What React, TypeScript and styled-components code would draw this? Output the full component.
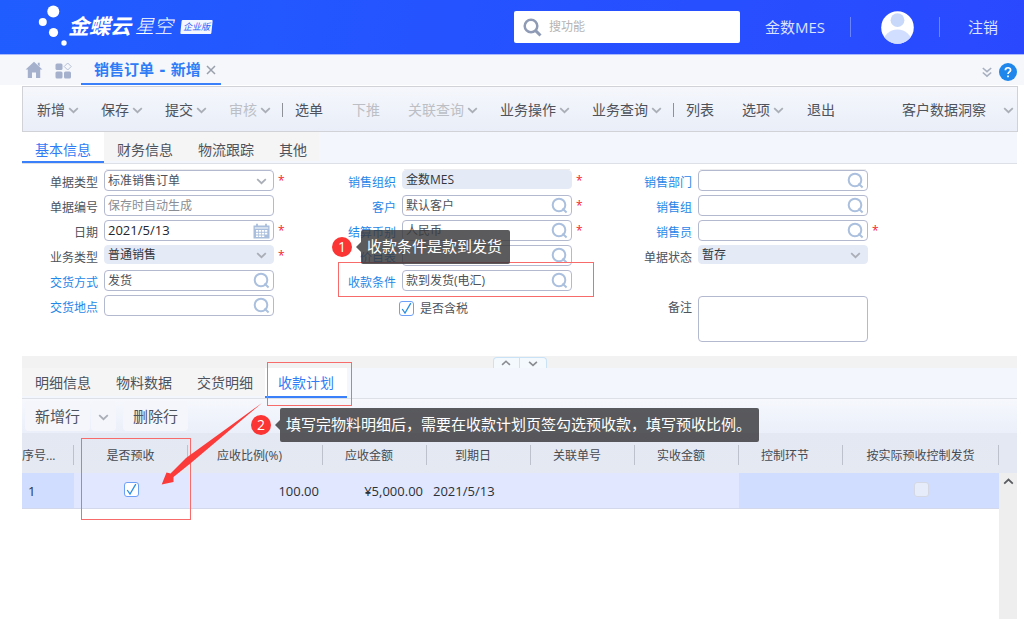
import React from "react";
import styled, { createGlobalStyle, css } from "styled-components";

const GlobalStyle = createGlobalStyle`
  *, *::before, *::after { box-sizing: border-box; }
  body {
    margin: 0;
    background: #fff;
    color: #4d525b;
    font-family: "Open Sans", "Noto Sans CJK SC", sans-serif;
    font-size: 12px;
    line-height: 20px;
  }
  button, input, select, textarea { font: inherit; color: inherit; margin: 0; }
  button { background: none; border: 0; padding: 0; cursor: pointer; white-space: nowrap; }
`;

const Page = styled.div`
  display: flex;
  flex-direction: column;
  min-height: 100vh;
  min-width: 960px;
`;

/* ---------- header ---------- */

const Header = styled.header`
  display: flex;
  align-items: center;
  height: 55px;
  padding: 0 26px 0 37px;
  border-bottom: 1px solid #a9b9fb;
  background: linear-gradient(100deg, #205dff 0%, #2553ff 45%, #2a49ff 100%);
  color: #dbe3ff;
  font-size: 15px;
`;

const Brand = styled.div`
  display: flex;
  align-items: center;
  flex: 1;
  color: #fff;
  font-style: italic;
  line-height: 18px;
  white-space: nowrap;
`;

const BrandName = styled.span`
  margin-left: 1px;
  padding-bottom: 2px;
  font-size: 21px;
  font-weight: 700;
`;

const BrandSuffix = styled.span`
  margin: 0 8px 0 4px;
  padding-bottom: 2px;
  font-size: 19px;
  font-weight: 300;
`;

const Edition = styled.span`
  position: relative;
  z-index: 0;
  height: 14px;
  padding: 0 2px;
  color: #2f5dfb;
  font-size: 9px;
  line-height: 14px;
  &::before {
    content: "";
    position: absolute;
    inset: 0;
    z-index: -1;
    border-radius: 1px;
    background: #f4f7ff;
    transform: skewX(-6deg);
  }
`;

const SearchBox = styled.label`
  display: flex;
  align-items: center;
  gap: 7px;
  width: 226px;
  height: 32px;
  margin-right: 25px;
  padding: 0 9px;
  border-radius: 2px;
  background: #fff;
  input {
    flex: 1;
    min-width: 0;
    border: 0;
    outline: 0;
    padding: 0;
    color: #555;
    font-size: 12px;
  }
  input::placeholder { color: #b4b4b4; }
`;

const HeaderDivider = styled.span`
  width: 1px;
  height: 20px;
  margin: 0 28px 0 25px;
  background: #6a86ff;
`;

const AvatarButton = styled.button`
  display: flex;
  margin-left: 2px;
`;

/* ---------- open documents ---------- */

const DocBar = styled.div`
  display: flex;
  align-items: center;
  height: 30px;
  padding: 0 7px 0 25px;
  background: #f5f7fb;
`;

const DocTools = styled.div`
  display: flex;
  gap: 12px;
  align-items: center;
  width: 56px;
  button { display: flex; }
`;

const DocTab = styled.div`
  display: flex;
  align-items: center;
  gap: 5px;
  height: 30px;
  padding: 2px 5px 0 13px;
  border-bottom: 2px solid #3a80fb;
  color: #2f7cf6;
  font-family: "DejaVu Sans", "Noto Sans CJK SC", sans-serif;
  font-size: 15px;
  font-weight: 700;
  white-space: pre;
  button { display: flex; }
`;

const DocRight = styled.div`
  display: flex;
  align-items: center;
  gap: 7px;
  margin-left: auto;
  padding-top: 4px;
  button { display: flex; }
`;

const HelpButton = styled.button`
  justify-content: center;
  width: 18px;
  height: 18px;
  border-radius: 50%;
  background: #1f87ec;
  color: #fff;
`;

/* ---------- toolbar ---------- */

const Content = styled.main`
  display: flex;
  flex-direction: column;
  flex: 1;
  padding: 1px 6px 0 22px;
`;

const Toolbar = styled.div`
  display: flex;
  align-items: center;
  height: 46px;
  padding: 1px 3px 0;
  border: 1px solid #d0d2d8;
  background: linear-gradient(#f5f7fc, #e9eef8);
`;

const ToolButton = styled.button<{ $menu?: boolean }>`
  display: flex;
  align-items: center;
  gap: 3px;
  padding: ${(p) => (p.$menu ? "0 11px" : "0 17px 0 12px")};
  font-size: 14px;
  &:disabled { color: #bcbfc5; cursor: default; }
`;

const ToolSeparator = styled.span`
  width: 1px;
  height: 14px;
  background: #8e9198;
`;

const ToolSpacer = styled.span`
  flex: 1;
`;

/* ---------- tab strips ---------- */

const TabStrip = styled.div<{ $tall?: boolean }>`
  display: flex;
  height: ${(p) => (p.$tall ? 32 : 31)}px;
  margin-right: 1px;
  border-bottom: 1px solid #dde0e7;
  background: #f3f6fc;
  > button { padding-top: ${(p) => (p.$tall ? 6 : 2)}px; }
`;

const Tab = styled.button<{ $active?: boolean }>`
  position: relative;
  padding: 0 12px 0 13px;
  border-bottom: 2px solid transparent;
  background: #f5f5f6;
  background-clip: padding-box;
  font-size: 14px;
  ${(p) =>
    p.$active &&
    css`
      padding-right: 13px;
      border-color: #3a80fb;
      background: #fff;
      color: #2f7cf6;
    `}
`;

/* ---------- form ---------- */

const Form = styled.form`
  display: grid;
  grid-template-columns: 298fr 296fr 402fr;
  height: 192px;
`;

const Column = styled.div`
  position: relative;
  display: grid;
  grid-template-columns: 76px 170px 10px;
  grid-auto-rows: 21px;
  gap: 4px 6px;
  align-content: start;
  padding-top: 6px;
  background: linear-gradient(#ececee, #ececee) 84px 5px / 166px 1px no-repeat;
`;

const FieldLabel = styled.label<{ $link?: boolean; $last?: boolean }>`
  grid-column: 1;
  ${(p) => p.$last && "grid-row: 6;"}
  padding-top: 3px;
  color: ${(p) => (p.$link ? "#1f87e8" : "#4d525b")};
  text-align: right;
  white-space: nowrap;
`;

const Control = styled.div<{ $locked?: boolean; $lookup?: boolean }>`
  display: flex;
  align-items: center;
  height: ${(p) => (p.$locked ? "19px" : "21px")};
  padding: 0 ${(p) => (p.$lookup ? 3 : 6)}px 0 3px;
  border: 1px solid ${(p) => (p.$locked ? "#e4eaf6" : "#b3b9ce")};
  border-radius: 4px;
  background: ${(p) => (p.$locked ? "#e4eaf6" : "#fff")};
  color: ${(p) => (p.$locked ? "#33373e" : "#4d525b")};
  input, select {
    flex: 1;
    width: 0;
    height: 17px;
    padding: 0;
    border: 0;
    outline: 0;
    appearance: none;
    background: none;
    line-height: 17px;
    opacity: 1;
  }
  input::placeholder { color: #8a8d93; }
  button { display: flex; }
  svg { flex: none; }
`;

const DateInput = styled.input`
  color: #22262c;
  font-size: 13px;
`;

const Required = styled.span`
  margin-left: -2px;
  color: #f5222d;
  font-size: 12px;
  line-height: 22px;
`;

const Remark = styled.textarea`
  grid-column: 2;
  grid-row: 6;
  height: 46px;
  margin-top: 1px;
  border: 1px solid #b3b9ce;
  border-radius: 4px;
  outline: 0;
  resize: none;
`;

const CheckRow = styled.label`
  grid-column: 2 / 4;
  display: flex;
  align-items: center;
  gap: 6px;
  height: 21px;
  margin: 3px 0 0 -3px;
`;

const CheckBox = styled.input.attrs({ type: "checkbox" })`
  appearance: none;
  display: inline-block;
  width: 15px;
  height: 15px;
  border: 1px solid #6fa0f7;
  border-radius: 3px;
  background: #fff;
  vertical-align: middle;
  &:checked {
    background: #fff
      url("data:image/svg+xml,%3Csvg xmlns='http://www.w3.org/2000/svg' viewBox='0 0 13 13'%3E%3Cpath d='M2.2 7 5 11 10.8 1.2' fill='none' stroke='%232b8fe0' stroke-width='1.3'/%3E%3C/svg%3E");
  }
  &:disabled { border-color: #d3d8e4; background: #e6ecfa; }
`;

/* ---------- splitter ---------- */

const Splitter = styled.div`
  display: flex;
  justify-content: center;
  align-items: flex-end;
  height: 12px;
  margin-right: 1px;
  background: #f2f2f2;
`;

const SplitButton = styled.button`
  display: flex;
  justify-content: center;
  align-items: center;
  width: 27px;
  height: 11px;
  border: 1px solid #c9e2f6;
  border-bottom: 0;
  background: #f4f9fd;
  &:first-child { border-radius: 4px 0 0 0; }
  &:last-child { border-left: 0; border-radius: 0 4px 0 0; }
`;

/* ---------- detail grid ---------- */

const GridTools = styled.div`
  display: flex;
  align-items: center;
  height: 34px;
  margin-right: 1px;
  padding-left: 3px;
  background: linear-gradient(#f6f8fd, #eaeff9);
`;

const GridButton = styled.button`
  display: flex;
  align-items: center;
  height: 30px;
  padding: 0 10px;
  border-radius: 4px;
  background: #f4f6fb;
  font-size: 15px;
`;

const DropButton = styled(GridButton)`
  margin: 0 7px 0 1px;
  padding: 0 7px;
`;

const GridPanel = styled.section`
  position: relative;
  display: flex;
  flex: 1;
  margin-right: 1px;
`;

const TableArea = styled.div`
  flex: 1;
`;

const Table = styled.table`
  width: 100%;
  table-layout: fixed;
  border-collapse: collapse;
  th {
    position: relative;
    height: 40px;
    padding: 6px 0 0;
    background: linear-gradient(#e3e8f2, #e5e9f2);
    color: #454a53;
    font-weight: 400;
    white-space: nowrap;
  }
  th::after {
    content: "";
    position: absolute;
    top: 12px;
    right: 0;
    width: 1px;
    height: 20px;
    background: #bcc1cc;
  }
  td {
    height: 35px;
    padding: 2px 0 0;
    border-bottom: 1px solid #d3d9ea;
    background: #e0e7fe;
    color: #2c3037;
    font-size: 13px;
    white-space: nowrap;
  }
`;

const Th = styled.th<{ $kind?: "first" | "check" }>`
  text-align: ${(p) => (p.$kind === "first" ? "left" : "center")};
  && { padding-right: ${(p) => (p.$kind ? "1px" : "12px")}; }
`;

const Td = styled.td<{ $align?: "left" | "right" | "center"; $dim?: boolean }>`
  && {
    padding-left: ${(p) => (p.$align === "left" || !p.$align ? "6px" : "0")};
    padding-right: ${(p) => (p.$align === "right" ? "4px" : "0")};
    text-align: ${(p) => p.$align || "left"};
    ${(p) => p.$dim && "background: #d1ddfe;"}
  }
  ${CheckBox} { display: block; margin: -4px auto 0; }
`;

const ScrollTrack = styled.div`
  width: 18px;
  padding-top: 43px;
  background: linear-gradient(#e4e8f2, #e4e8f2) 0 0 / 100% 40px no-repeat #eeeeee;
  text-align: center;
  svg { display: block; margin: 0 auto; }
`;

/* ---------- guide marks over the page ---------- */

const Mark = styled.span<{ $x: number; $y: number; $w: number; $h: number }>`
  position: absolute;
  z-index: 2;
  left: ${(p) => p.$x}px;
  top: ${(p) => p.$y}px;
  width: ${(p) => p.$w}px;
  height: ${(p) => p.$h}px;
  border: 1px solid #f86b6b;
  pointer-events: none;
`;

const Note = styled.div<{ $x: number; $y: number }>`
  position: absolute;
  z-index: 3;
  left: ${(p) => p.$x}px;
  top: ${(p) => p.$y}px;
  display: flex;
  align-items: center;
  color: #fff;
  font-size: 15px;
  white-space: nowrap;
`;

const NoteNumber = styled.span`
  width: 20px;
  height: 20px;
  border-radius: 50%;
  background: #fb3434;
  font-size: 14px;
  line-height: 20px;
  text-align: center;
`;

const NoteText = styled.span`
  position: relative;
  height: 34px;
  margin-left: 9px;
  padding: 0 8px 0 6px;
  border-radius: 2px;
  background: rgba(58, 58, 60, 0.83);
  line-height: 33px;
  &::before {
    content: "";
    position: absolute;
    top: 12px;
    left: -5px;
    border: 5px solid transparent;
    border-left: 0;
    border-right-color: rgba(58, 58, 60, 0.83);
  }
`;

const Arrow = styled.svg`
  position: absolute;
  z-index: 2;
  left: 138px;
  top: -32px;
  pointer-events: none;
`;

/* ---------- icons ---------- */

const Chevron = ({ up, color = "#aaaeb6", size = 11 }: { up?: boolean; color?: string; size?: number }) => (
  <svg width={size} height={size} viewBox="0 0 11 11" fill="none" stroke={color} strokeWidth="1.8">
    <path d={up ? "M1.2 7.6 5.5 3.6 9.8 7.6" : "M1.2 4.2 5.5 8.2 9.8 4.2"} />
  </svg>
);

const Lens = () => (
  <svg width="17" height="17" viewBox="0 0 17 17" fill="none" stroke="#abc0de" strokeWidth="2">
    <circle cx="8" cy="8" r="6.3" />
    <path d="M11.4 11.6 15.6 15.4" />
  </svg>
);

const CalendarIcon = () => (
  <svg width="17" height="16" viewBox="0 0 17 16">
    <path fill="#a8bedc" d="M.5 2.5h2.6V.8h1.8v1.7h7.2V.8h1.8v1.7h2.6v13H.5z" />
    <path fill="#fff" d="M1.8 4.6h13.4v.9H1.8zM3 7h2.3v1.8H3zM6 7h2.3v1.8H6zM9 7h2.3v1.8H9zM12 7h2.3v1.8H12zM3 9.7h2.3v1.8H3zM6 9.7h2.3v1.8H6zM9 9.7h2.3v1.8H9zM12 9.7h2.3v1.8H12zM3 12.4h2.3V14H3zM6 12.4h2.3V14H6zM9 12.4h2.3V14H9z" />
  </svg>
);

const BrandDots = () => (
  <svg width="30" height="44" viewBox="0 0 30 44" fill="#fff">
    <circle cx="16.300" cy="6.500" r="6" />
    <circle cx="5.800" cy="17" r="4" />
    <circle cx="16.500" cy="27.500" r="4.600" />
    <circle cx="27" cy="38" r="2.700" />
  </svg>
);

const HomeIcon = () => (
  <svg width="18" height="18" viewBox="0 0 18 18" fill="#a5b0cc">
    <path d="M9 .8 17.400 8.600H15.200V17H11V11.500H7V17H2.800V8.600H.6zM12.800 1.800h1.900v3.600l-1.900-1.700z" />
  </svg>
);

const AppsIcon = () => (
  <svg width="17" height="17" viewBox="0 0 17 17" fill="#a5b0cc">
    <rect x=".5" y="1.500" width="7" height="6.500" rx="1.500" />
    <rect x=".5" y="9.500" width="7" height="7" rx="1.500" />
    <rect x="9" y="9.500" width="7" height="7" rx="1.500" />
    <path d="M12.700 1 16.200 4.500 12.700 8 9.200 4.500z" fill="none" stroke="#b7c0d8" />
  </svg>
);

const Avatar = () => (
  <svg width="33" height="33" viewBox="0 0 33 33">
    <defs>
      <clipPath id="face"><circle cx="16.500" cy="16.500" r="16.300" /></clipPath>
    </defs>
    <g clipPath="url(#face)">
      <rect width="33" height="33" fill="#fff" />
      <ellipse cx="16.500" cy="32" rx="14.500" ry="13.500" fill="#d2deff" />
      <circle cx="16.500" cy="9.500" r="8.500" fill="#fff" />
      <circle cx="16.500" cy="9.200" r="6.900" fill="#c8d8fb" />
    </g>
  </svg>
);

/* ---------- fields ---------- */

type FieldProps = {
  id: string;
  label: string;
  value?: string;
  placeholder?: string;
  kind: "lookup" | "select" | "text" | "date";
  link?: boolean;
  locked?: boolean;
  required?: boolean;
};

const Field = ({ id, label, value = "", placeholder, kind, link, locked, required }: FieldProps) => (
  <>
    <FieldLabel htmlFor={id} $link={link}>{label}</FieldLabel>
    <Control $locked={locked} $lookup={kind === "lookup" || kind === "date"}>
      {kind === "select" ? (
        <select id={id} disabled={locked} defaultValue={value}>
          <option>{value}</option>
        </select>
      ) : kind === "date" ? (
        <DateInput id={id} defaultValue={value} />
      ) : (
        <input id={id} defaultValue={value} placeholder={placeholder} readOnly={locked} />
      )}
      {kind === "select" && <Chevron />}
      {kind === "date" && <CalendarIcon />}
      {kind === "lookup" && (
        <button type="button" aria-label={label}><Lens /></button>
      )}
    </Control>
    <Required>{required ? "*" : ""}</Required>
  </>
);

type Tool = { text: string; menu?: boolean; off?: boolean; bar?: boolean };

const tools: Tool[] = [
  { text: "新增", menu: true },
  { text: "保存", menu: true },
  { text: "提交", menu: true },
  { text: "审核", menu: true, off: true, bar: true },
  { text: "选单" },
  { text: "下推", off: true },
  { text: "关联查询", menu: true, off: true },
  { text: "业务操作", menu: true },
  { text: "业务查询", menu: true, bar: true },
  { text: "列表" },
  { text: "选项", menu: true },
  { text: "退出" },
];

const columnWidths = [52, 114, 135, 104, 104, 104, 104, 104, 156];

export default function App() {
  return (
    <>
      <GlobalStyle />
      <Page>
        <Header>
          <Brand>
            <BrandDots />
            <BrandName>金蝶云</BrandName>
            <BrandSuffix>星空</BrandSuffix>
            <Edition>企业版</Edition>
          </Brand>
          <SearchBox>
            <svg width="19" height="19" viewBox="0 0 19 19" fill="none" stroke="#8f9bb5">
              <circle cx="8" cy="8" r="6.300" strokeWidth="2.500" />
              <path d="M12.600 12.600 17.500 17.500" strokeWidth="3" />
            </svg>
            <input aria-label="搜功能" placeholder="搜功能" />
          </SearchBox>
          <button type="button">金数MES</button>
          <HeaderDivider />
          <AvatarButton type="button" aria-label="用户"><Avatar /></AvatarButton>
          <HeaderDivider />
          <button type="button">注销</button>
        </Header>

        <DocBar>
          <DocTools>
            <button type="button" aria-label="主页"><HomeIcon /></button>
            <button type="button" aria-label="应用"><AppsIcon /></button>
          </DocTools>
          <DocTab>
            销售订单 - 新增
            <button type="button" aria-label="关闭">
              <svg width="10" height="10" viewBox="0 0 10 10" stroke="#9aa0ab" strokeWidth="1.500">
                <path d="M1 1 9 9M9 1 1 9" />
              </svg>
            </button>
          </DocTab>
          <DocRight>
            <button type="button" aria-label="展开">
              <svg width="10" height="11" viewBox="0 0 10 11" fill="none" stroke="#a9b0c0" strokeWidth="1.600">
                <path d="M.8 1 5 4.600 9.200 1M.8 5.500 5 9.100 9.200 5.500" />
              </svg>
            </button>
            <HelpButton type="button" aria-label="帮助">
              <svg width="18" height="18" viewBox="0 0 18 18" fill="none" stroke="#fff" strokeWidth="1.700">
                <path d="M6.400 7.200C6.400 3.900 11.700 4 11.600 7.100 11.500 8.900 9 9 9 11.100M9 12.400V14.200" />
              </svg>
            </HelpButton>
          </DocRight>
        </DocBar>

        <Content>
          <Toolbar>
            {tools.map((t) => (
              <React.Fragment key={t.text}>
                <ToolButton type="button" $menu={t.menu} disabled={t.off}>
                  {t.text}
                  {t.menu && <Chevron />}
                </ToolButton>
                {t.bar && <ToolSeparator />}
              </React.Fragment>
            ))}
            <ToolSpacer />
            <ToolButton type="button">客户数据洞察</ToolButton>
            <Chevron />
          </Toolbar>

          <TabStrip $tall>
            <Tab type="button" $active>基本信息</Tab>
            <Tab type="button">财务信息</Tab>
            <Tab type="button">物流跟踪</Tab>
            <Tab type="button">其他</Tab>
          </TabStrip>

          <Form onSubmit={(e) => e.preventDefault()}>
            <Column>
              <Field id="bill-type" label="单据类型" value="标准销售订单" kind="select" required />
              <Field id="bill-no" label="单据编号" placeholder="保存时自动生成" kind="text" />
              <Field id="date" label="日期" value="2021/5/13" kind="date" required />
              <Field id="biz-type" label="业务类型" value="普通销售" kind="select" locked required />
              <Field id="delivery" label="交货方式" value="发货" kind="lookup" link />
              <Field id="place" label="交货地点" kind="lookup" link />
            </Column>
            <Column>
              <Field id="org" label="销售组织" value="金数MES" kind="text" link locked required />
              <Field id="customer" label="客户" value="默认客户" kind="lookup" link required />
              <Field id="currency" label="结算币别" value="人民币" kind="lookup" link required />
              <Field id="price-list" label="价目表" kind="lookup" link />
              <Field id="terms" label="收款条件" value="款到发货(电汇)" kind="lookup" link />
              <CheckRow>
                <CheckBox defaultChecked />
                是否含税
              </CheckRow>
              <Mark $x={18} $y={98} $w={256} $h={35} />
              <Note $x={12} $y={66}>
                <NoteNumber>1</NoteNumber>
                <NoteText>收款条件是款到发货</NoteText>
              </Note>
            </Column>
            <Column>
              <Field id="dept" label="销售部门" kind="lookup" link />
              <Field id="group" label="销售组" kind="lookup" link />
              <Field id="seller" label="销售员" kind="lookup" link required />
              <Field id="status" label="单据状态" value="暂存" kind="select" locked />
              <FieldLabel htmlFor="remark" $last>备注</FieldLabel>
              <Remark id="remark" />
            </Column>
          </Form>

          <Splitter>
            <SplitButton type="button" aria-label="收起"><Chevron up color="#8a8d92" size={10} /></SplitButton>
            <SplitButton type="button" aria-label="展开"><Chevron color="#8a8d92" size={10} /></SplitButton>
          </Splitter>

          <TabStrip>
            <Tab type="button">明细信息</Tab>
            <Tab type="button">物料数据</Tab>
            <Tab type="button">交货明细</Tab>
            <Tab type="button" $active>
              收款计划
              <Mark $x={2} $y={-6} $w={85} $h={44} />
            </Tab>
          </TabStrip>

          <GridTools>
            <GridButton type="button">新增行</GridButton>
            <DropButton type="button" aria-label="更多"><Chevron /></DropButton>
            <GridButton type="button">删除行</GridButton>
          </GridTools>

          <GridPanel>
            <TableArea>
              <Table>
                <colgroup>
                  {columnWidths.map((w, i) => <col key={i} width={w} />)}
                </colgroup>
                <thead>
                  <tr>
                    <Th $kind="first">序号...</Th>
                    <Th $kind="check">是否预收</Th>
                    <Th>应收比例(%)</Th>
                    <Th>应收金额</Th>
                    <Th>到期日</Th>
                    <Th>关联单号</Th>
                    <Th>实收金额</Th>
                    <Th>控制环节</Th>
                    <Th $kind="check">按实际预收控制发货</Th>
                  </tr>
                </thead>
                <tbody>
                  <tr>
                    <Td $dim>1</Td>
                    <Td $align="center"><CheckBox defaultChecked aria-label="是否预收" /></Td>
                    <Td $align="right">100.00</Td>
                    <Td $align="right">¥5,000.00</Td>
                    <Td>2021/5/13</Td>
                    <Td />
                    <Td />
                    <Td $dim />
                    <Td $align="center" $dim><CheckBox disabled aria-label="按实际预收控制发货" /></Td>
                  </tr>
                </tbody>
              </Table>
            </TableArea>
            <ScrollTrack><Chevron up color="#5a5c60" /></ScrollTrack>
            <Mark $x={59} $y={5} $w={110} $h={82} />
            <Arrow width="104" height="86" viewBox="0 0 104 86" fill="#fb3a3a">
              <path d="M102 2 31.500 61.500 13.500 76 13.500 81 1.700 83.500 6.500 71.500 10.500 72.500 26 57z" />
            </Arrow>
            <Note $x={229} $y={-25}>
              <NoteNumber>2</NoteNumber>
              <NoteText>填写完物料明细后，需要在收款计划页签勾选预收款，填写预收比例。</NoteText>
            </Note>
          </GridPanel>
        </Content>
      </Page>
    </>
  );
}
